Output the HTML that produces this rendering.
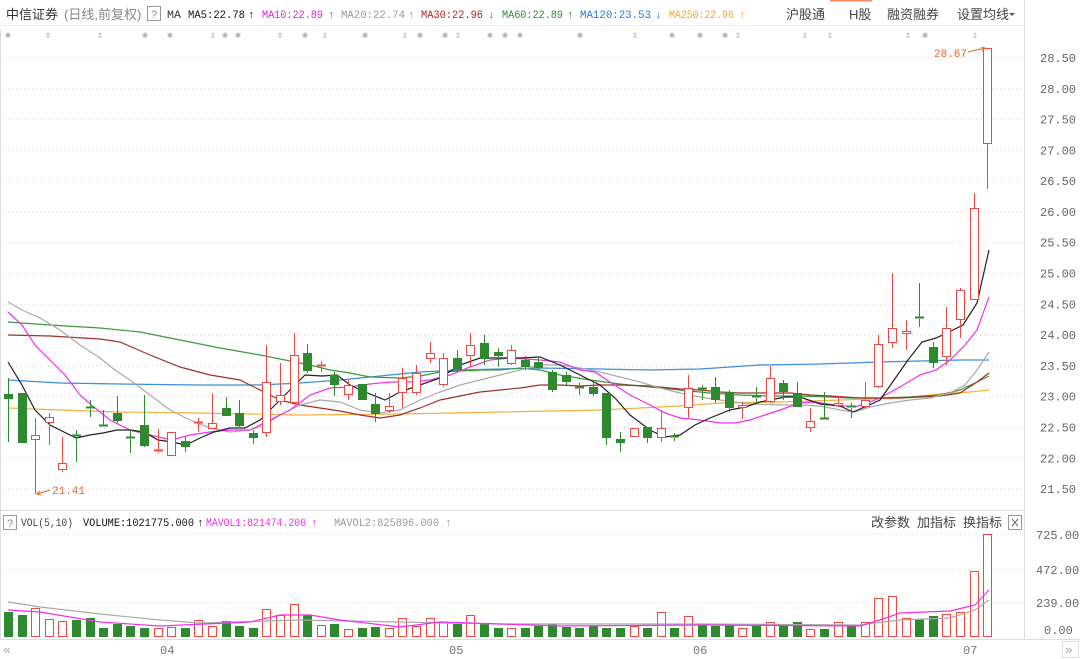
<!DOCTYPE html>
<html><head><meta charset="utf-8">
<style>
html,body{margin:0;padding:0;background:#fff;width:1080px;height:659px;overflow:hidden;font-family:"Liberation Sans","Noto Sans CJK SC",sans-serif;}
svg{position:absolute;left:0;top:0}
</style></head>
<body>
<svg id="s" width="1080" height="659" xmlns="http://www.w3.org/2000/svg" font-family="Liberation Mono, monospace">
<rect width="1080" height="659" fill="#fff"/>
<line x1="830" y1="0.5" x2="872" y2="0.5" stroke="#f08a5d" stroke-width="2"/>
<g id="grid"></g>
<!-- header -->
<text x="6" y="19" font-family="Liberation Sans, Noto Sans CJK SC, sans-serif" font-size="13" fill="#333">中信证券</text>
<text x="64" y="19" font-family="Liberation Sans, Noto Sans CJK SC, sans-serif" font-size="13" fill="#888">(日线,前复权)</text>
<rect x="147.5" y="6.5" width="13" height="14" fill="#fff" stroke="#999"/>
<text x="151" y="18" font-size="11" fill="#888">?</text>
<g font-size="11">
<text x="167" y="18" fill="#333" textLength="14" lengthAdjust="spacingAndGlyphs">MA</text>
<text x="188" y="18" fill="#111" textLength="57" lengthAdjust="spacingAndGlyphs">MA5:22.78</text><text x="248" y="18" fill="#111">↑</text>
<text x="262" y="18" fill="#e020e0" textLength="61" lengthAdjust="spacingAndGlyphs">MA10:22.89</text><text x="328" y="18" fill="#e020e0">↑</text>
<text x="341" y="18" fill="#999" textLength="64" lengthAdjust="spacingAndGlyphs">MA20:22.74</text><text x="408" y="18" fill="#999">↑</text>
<text x="421" y="18" fill="#b22222" textLength="62" lengthAdjust="spacingAndGlyphs">MA30:22.96</text><text x="488" y="18" fill="#e03030">↓</text>
<text x="502" y="18" fill="#2e8b2e" textLength="61" lengthAdjust="spacingAndGlyphs">MA60:22.89</text><text x="567" y="18" fill="#2e8b2e">↑</text>
<text x="580" y="18" fill="#1e7fd6" textLength="71" lengthAdjust="spacingAndGlyphs">MA120:23.53</text><text x="655" y="18" fill="#1e7fd6">↓</text>
<text x="669" y="18" fill="#f5a623" textLength="65" lengthAdjust="spacingAndGlyphs">MA250:22.96</text><text x="739" y="18" fill="#f5a623">↑</text>
</g>
<g font-family="Liberation Sans, Noto Sans CJK SC, sans-serif" font-size="13" fill="#444">
<text x="786" y="19">沪股通</text>
<text x="849" y="19">H股</text>
<text x="887" y="19">融资融券</text>
<text x="957" y="19">设置均线</text>
</g>
<path d="M1009 13 l6 0 l-3 3z" fill="#555"/>
<line x1="0" y1="25.5" x2="1025" y2="25.5" stroke="#eee"/>
<g id="stars" font-size="10" fill="#b0b0b0"></g>
<line x1="1024.5" y1="0" x2="1024.5" y2="639" stroke="#ddd"/>
<line x1="0" y1="510.5" x2="1025" y2="510.5" stroke="#ddd"/>
<line x1="0" y1="639.5" x2="1080" y2="639.5" stroke="#ddd"/>
<line x1="0.5" y1="30" x2="0.5" y2="639" stroke="#ddd"/>
<g id="axis" font-size="12" fill="#666"></g>
<!-- MA lines -->
<g fill="none" stroke-width="1.2">
<polyline stroke="#f5b041" points="8,408 60,410 120,412 200,413 300,415 400,414 500,412 600,410 680,406 720,403 780,402 840,400 900,398 940,394 970,392 989,390"/>
<polyline stroke="#3b8fd9" points="8,380 60,383 120,384 200,385 260,385 300,383 340,380 380,376 420,372 460,370 500,369 540,368 600,369 650,370 700,369 760,365 820,364 880,362 920,361 960,360 989,360"/>
<polyline stroke="#3c9a3c" points="8,322 50,325 100,328 140,332 180,340 220,348 260,355 290,361 310,365 330,370 350,373 370,377 400,378 420,376 440,372 460,371 480,370 500,370 520,368 540,370 560,375 590,380 620,384 650,387 680,390 710,393 740,395 770,396 800,396 830,397 850,398 880,398 910,397 940,395 960,390 977,382 989,376"/>
<polyline stroke="#a0302a" points="8,335 50,336 100,339 120,342 150,355 180,367 210,375 240,380 260,390 280,400 300,405 320,408 340,411 360,415 380,418 400,415 420,408 440,400 460,396 480,392 500,390 520,388 540,385 560,385 580,386 600,385 620,385 650,386 680,389 700,390 720,392 740,393 760,393 790,393 810,395 830,396 860,398 880,398 900,398 920,397 940,396 960,393 977,382 989,373"/>
<polyline stroke="#aaa" points="8,302 22,310 40,318 60,330 80,345 100,358 115,370 130,380 150,395 170,410 190,420 210,428 230,432 250,430 265,425 280,415 300,405 320,400 340,402 360,410 380,413 400,410 420,400 440,392 460,385 480,380 500,375 520,370 540,365 560,365 580,368 600,372 620,377 640,382 660,388 680,393 700,397 720,400 750,404 780,405 800,405 820,406 840,410 855,412 870,407 890,403 910,400 930,398 950,393 965,385 977,370 989,352"/>
<polyline stroke="#f030f0" points="8,312 22,325 35,345 50,360 65,375 80,395 95,408 110,420 130,430 150,435 172,440 190,435 210,432 230,430 250,430 270,420 290,410 310,395 330,388 350,387 370,384 390,382 410,382 430,380 450,375 470,367 490,360 510,358 540,360 560,362 580,370 595,372 610,382 630,395 650,405 665,413 680,418 700,420 720,423 735,423 750,420 765,415 780,410 800,403 815,402 835,405 855,407 870,402 880,398 900,387 920,375 936,370 950,360 965,345 977,330 989,297"/>
<polyline stroke="#222" points="8,362 22,385 35,410 50,425 76,438 90,435 103,433 117,430 130,430 144,432 158,440 172,442 186,445 200,438 214,432 230,428 245,428 260,420 275,405 290,390 305,375 322,376 337,375 350,385 365,392 385,400 400,392 420,385 440,378 460,365 480,358 500,358 520,358 540,357 560,365 580,375 600,385 615,398 630,415 650,430 664,437 680,435 695,425 710,418 730,410 745,407 760,402 785,397 800,397 820,404 840,406 853,412 867,406 880,400 894,380 908,360 922,342 936,338 949,332 963,325 977,303 989,250"/>
</g>
<g id="candles"></g>
<!-- extremes -->
<text x="934" y="57" font-size="11" fill="#e8662a">28.67</text>
<path d="M968 52 L985 48 M981 47 L985 48 L982 51" stroke="#e8662a" fill="none"/>
<text x="52" y="494" font-size="11" fill="#e8662a">21.41</text>
<path d="M50 490 L37 494 M40 491 L37 494 L41 495" stroke="#e8662a" fill="none"/>
<!-- volume header -->
<rect x="3.5" y="515.5" width="13" height="14" fill="#fff" stroke="#999"/>
<text x="7" y="527" font-size="11" fill="#888">?</text>
<g font-size="11">
<text x="21" y="526" fill="#444" textLength="52" lengthAdjust="spacingAndGlyphs">VOL(5,10)</text>
<text x="83" y="526" fill="#111" textLength="111" lengthAdjust="spacingAndGlyphs">VOLUME:1021775.000</text><text x="197" y="526" fill="#111">↑</text>
<text x="206" y="526" fill="#f030f0" textLength="100" lengthAdjust="spacingAndGlyphs">MAVOL1:821474.200</text><text x="311" y="526" fill="#f030f0">↑</text>
<text x="334" y="526" fill="#999" textLength="105" lengthAdjust="spacingAndGlyphs">MAVOL2:825896.000</text><text x="445" y="526" fill="#999">↑</text>
</g>
<g font-family="Liberation Sans, Noto Sans CJK SC, sans-serif" font-size="13" fill="#444">
<text x="871" y="527">改参数</text>
<text x="917" y="527">加指标</text>
<text x="963" y="527">换指标</text>
</g>
<rect x="1008.5" y="515.5" width="13" height="14" fill="#fff" stroke="#999"/>
<path d="M1012 519 l6 7 M1018 519 l-6 7" stroke="#666"/>
<g id="vol"></g>
<g fill="none" stroke-width="1.2">
<polyline stroke="#aaa" points="8,602 40,607 100,614 160,620 200,623 300,620 400,622 500,624 700,624 860,625 900,620 950,618 975,610 989,600"/>
<polyline stroke="#f030f0" points="8,610 40,612 100,622 160,626 250,622 280,615 310,615 340,620 400,627 440,622 500,624 560,626 700,625 860,626 880,620 900,613 950,611 975,605 989,590"/>
</g>
<g font-size="12" fill="#666">
<text x="1036" y="539">725.00</text>
<text x="1036" y="574">472.00</text>
<text x="1036" y="607">239.00</text>
<text x="1044" y="634">0.00</text>
</g>
<!-- bottom axis -->
<g font-size="12" fill="#777">
<text x="160" y="654">04</text>
<text x="449" y="654">05</text>
<text x="693" y="654">06</text>
<text x="963" y="654">07</text>
</g>
<text x="3" y="654" font-size="13" fill="#aaa">«</text>
<rect x="1062.5" y="641.5" width="16" height="16" fill="#fff" stroke="#ddd"/>
<text x="1065" y="654" font-size="13" fill="#aaa">»</text>
</svg>
<script>
var NS="http://www.w3.org/2000/svg";
function el(p,t,a,txt){var e=document.createElementNS(NS,t);for(var k in a)e.setAttribute(k,a[k]);if(txt)e.textContent=txt;document.getElementById(p).appendChild(e);return e;}
var prices=["28.50","28.00","27.50","27.00","26.50","26.00","25.50","25.00","24.50","24.00","23.50","23.00","22.50","22.00","21.50"];
for(var i=0;i<prices.length;i++){var y=58+i*30.79;
 el("grid","line",{x1:0,y1:y,x2:1022,y2:y,stroke:"#d8d8d8","stroke-dasharray":"1,3"});
 el("axis","text",{x:1040,y:y+4},prices[i]);}
[534,570,603].forEach(function(y){el("grid","line",{x1:0,y1:y,x2:1022,y2:y,stroke:"#d8d8d8","stroke-dasharray":"1,3"});});
var st=[[8,"*"],[48,"↕"],[100,"↕"],[145,"*"],[170,"*"],[213,"↕"],[225,"*"],[238,"*"],[280,"↕"],[305,"*"],[325,"↕"],[365,"*"],[405,"↕"],[420,"*"],[445,"*"],[458,"↕"],[490,"*"],[505,"*"],[520,"*"],[580,"*"],[635,"↕"],[672,"*"],[700,"*"],[725,"*"],[738,"↕"],[805,"↕"],[830,"↕"],[908,"↕"],[925,"*"],[975,"↕"]];
st.forEach(function(s){el("stars","text",{x:s[0]-3,y:38},s[1]=="*"?"✱":"⇕");});
var C=[[394,399,378,442,"g"],[393,443,393,443,"g"],[435,440,418,494,"r"],[417,423,413,445,"r"],[463,470,437,472,"r"],[435,437,430,462,"g"],[407,409,400,417,"g"],[425,427,410,427,"g"],[413,421,396,423,"g"],[437,439,430,453,"g"],[425,446,395,447,"g"],[450,452,429,453,"r"],[432,456,432,456,"r"],[441,447,437,452,"g"],[422,424,418,432,"r"],[423,429,393,429,"r"],[408,416,397,416,"g"],[413,426,400,427,"g"],[433,438,430,444,"g"],[382,433,345,437,"r"],[395,402,363,405,"r"],[355,403,333,403,"r"],[353,371,344,373,"g"],[365,367,361,372,"r"],[375,385,372,396,"g"],[385,395,380,400,"r"],[384,400,384,400,"g"],[404,414,393,422,"g"],[406,411,393,413,"r"],[378,393,368,408,"r"],[373,393,365,395,"r"],[353,359,342,363,"r"],[358,385,353,387,"r"],[358,370,350,372,"g"],[345,356,333,367,"r"],[343,359,335,365,"g"],[352,356,348,367,"g"],[350,364,345,365,"r"],[360,367,356,370,"g"],[362,368,358,370,"g"],[372,390,370,392,"g"],[375,382,372,385,"g"],[387,389,383,395,"g"],[387,394,383,396,"g"],[393,438,393,445,"g"],[439,443,432,452,"g"],[428,437,428,437,"r"],[427,438,427,443,"g"],[428,438,410,442,"r"],[436,438,433,441,"g"],[388,408,375,418,"r"],[388,390,385,400,"g"],[387,400,377,403,"g"],[392,408,390,412,"g"],[405,408,402,419,"r"],[396,398,387,403,"g"],[378,402,366,403,"r"],[383,392,380,400,"g"],[393,407,382,407,"g"],[421,428,408,432,"r"],[418,420,392,420,"g"],[403,406,396,407,"r"],[406,408,403,418,"g"],[400,407,382,408,"r"],[344,387,335,388,"r"],[328,343,273,348,"r"],[331,334,320,350,"r"],[317,319,283,327,"g"],[347,363,342,368,"g"],[328,357,307,365,"r"],[290,320,288,338,"r"],[208,300,193,300,"r"],[48,144,48,189,"r"]];
var RED="#ec4b45",GRN="#2f8a2f";
C.forEach(function(c,i){var x=Math.round(8+13.6*i)+0.5;var col=c[4]=="r"?RED:GRN;
 el("candles","line",{x1:x,y1:c[2],x2:x,y2:c[0],stroke:col});
 el("candles","line",{x1:x,y1:c[1],x2:x,y2:c[3],stroke:col});
 var h=c[1]-c[0];
 if(h<=2){el("candles","line",{x1:x-4.5,y1:c[0]+0.5,x2:x+4.5,y2:c[0]+0.5,stroke:col,"stroke-width":2});}
 else if(c[4]=="r"){el("candles","rect",{x:x-4,y:c[0]+0.5,width:8,height:h-1,fill:"#fff",stroke:col});}
 else{el("candles","rect",{x:x-4.5,y:c[0],width:9,height:h,fill:col});}
});
var V=[612,615,608,619,621,620,618,628,624,626,628,628,627,628,620,626,621,626,628,609,615,604,615,625,624,629,628,627,628,618,626,618,622,624,615,623,628,628,628,626,624,627,628,626,628,628,626,628,612,628,616,625,626,625,628,626,622,626,622,629,629,622,626,622,598,596,618,619,616,614,612,571,534];
V.forEach(function(t,i){var c=C[i];if(!c)return;var x=Math.round(8+13.6*i)+0.5;var col=c[4]=="r"?RED:GRN;
 if(c[4]=="r")el("vol","rect",{x:x-4,y:t+0.5,width:8,height:637-t-1,fill:"#fff",stroke:col});
 else el("vol","rect",{x:x-4.5,y:t,width:9,height:637-t,fill:col});});
</script>
</body></html>
